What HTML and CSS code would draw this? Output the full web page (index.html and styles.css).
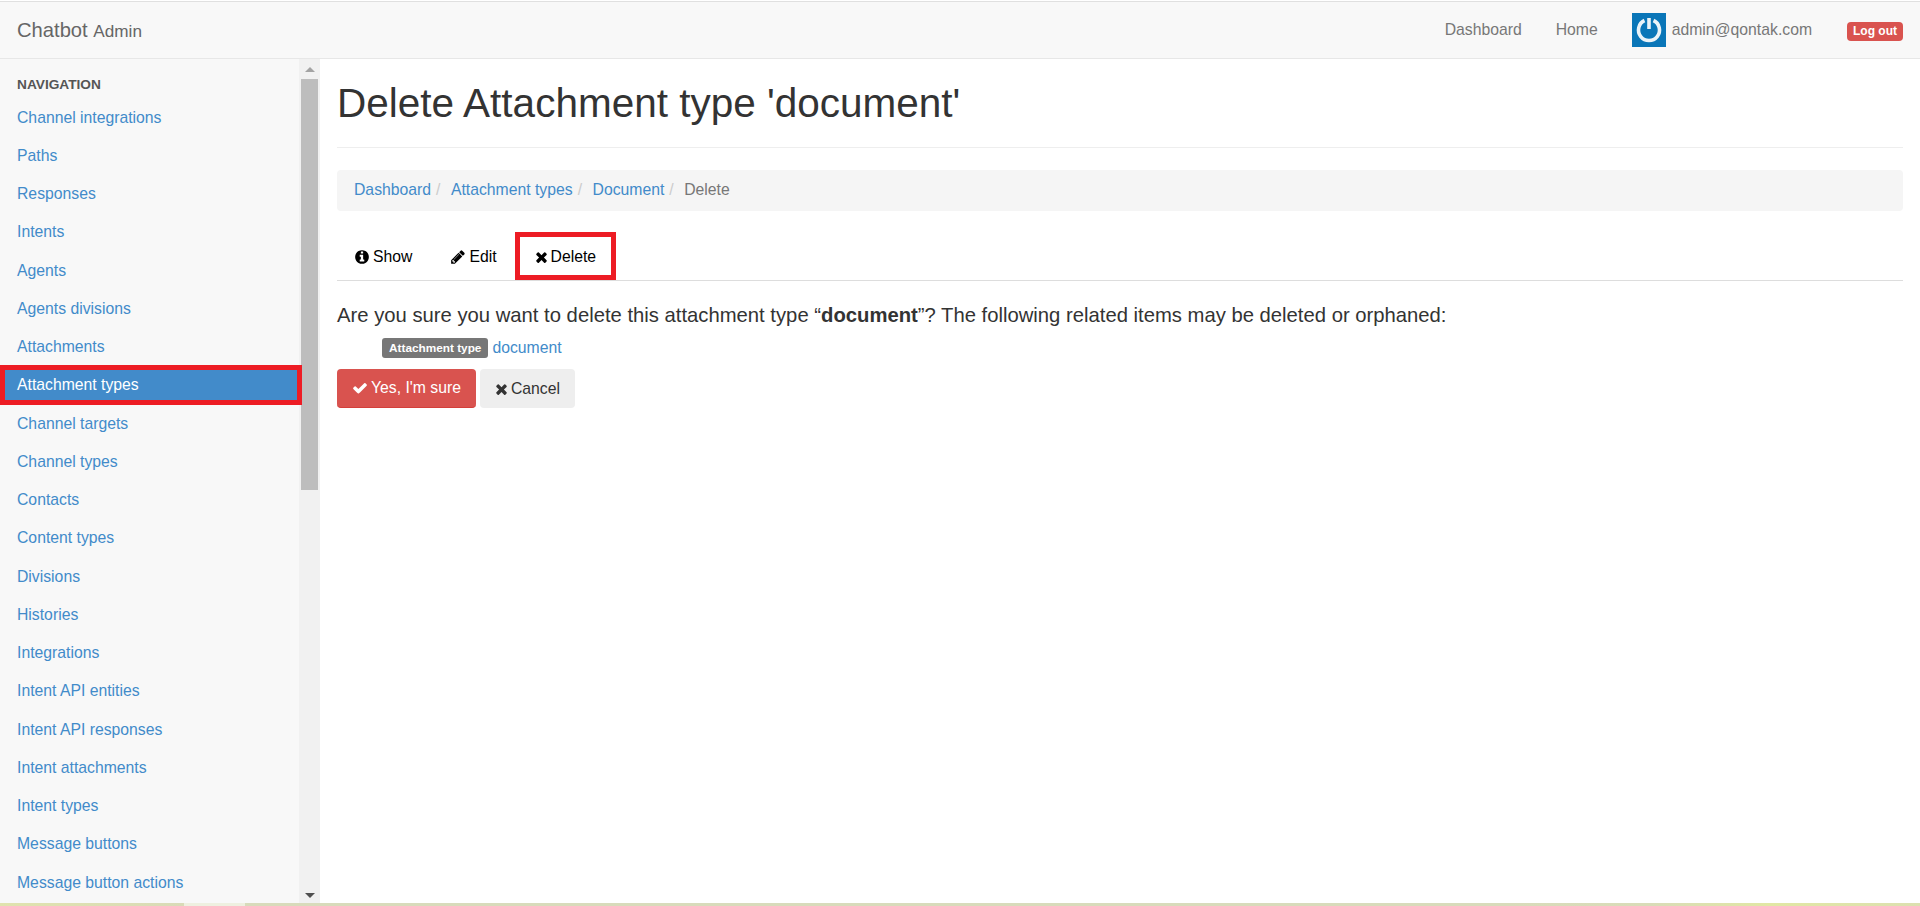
FILE: index.html
```html
<!DOCTYPE html>
<html>
<head>
    <title>Delete Attachment type</title>
    <link rel="stylesheet" href="styles.css">
</head>
<body>
    <!-- Top bar -->
    <header class="topbar">
        <a class="brand" href="#">Chatbot <small>Admin</small></a>
        <nav class="topnav">
            <a href="#">Dashboard</a>
            <a href="#">Home</a>
            <a class="user" href="#">
                <svg class="avatar" viewBox="0 0 34 34">
                    <rect width="34" height="34" fill="#0a76b8"/>
                    <path d="M12.5 7.5a10.5 10.5 0 1 0 9 0" fill="none" stroke="#eaf3f8" stroke-width="3.6"/>
                    <path d="M17 5v11" stroke="#eaf3f8" stroke-width="3.6"/>
                </svg>
                admin@qontak.com
            </a>
            <a class="logout" href="#">Log out</a>
        </nav>
    </header>

    <div class="layout">
        <!-- Sidebar -->
        <aside class="sidebar">
            <div class="sidebar-list">
                <h4 class="nav-title">NAVIGATION</h4>
                <ul class="nav-list">
                    <li><a href="#">Channel integrations</a></li>
                    <li><a href="#">Paths</a></li>
                    <li><a href="#">Responses</a></li>
                    <li><a href="#">Intents</a></li>
                    <li><a href="#">Agents</a></li>
                    <li><a href="#">Agents divisions</a></li>
                    <li><a href="#">Attachments</a></li>
                    <li class="active"><a href="#">Attachment types</a></li>
                    <li><a href="#">Channel targets</a></li>
                    <li><a href="#">Channel types</a></li>
                    <li><a href="#">Contacts</a></li>
                    <li><a href="#">Content types</a></li>
                    <li><a href="#">Divisions</a></li>
                    <li><a href="#">Histories</a></li>
                    <li><a href="#">Integrations</a></li>
                    <li><a href="#">Intent API entities</a></li>
                    <li><a href="#">Intent API responses</a></li>
                    <li><a href="#">Intent attachments</a></li>
                    <li><a href="#">Intent types</a></li>
                    <li><a href="#">Message buttons</a></li>
                    <li><a href="#">Message button actions</a></li>
                </ul>
            </div>
            <div class="scrollbar">
                <span class="arrow-up"></span>
                <div class="thumb"></div>
                <span class="arrow-down"></span>
            </div>
        </aside>

        <!-- Main content -->
        <main class="content">
            <h1 class="page-title">Delete Attachment type 'document'</h1>

            <ol class="breadcrumb">
                <li><a href="#">Dashboard</a></li>
                <li><a href="#">Attachment types</a></li>
                <li><a href="#">Document</a></li>
                <li class="current">Delete</li>
            </ol>

            <ul class="tabs">
                <li>
                    <svg class="icon" viewBox="0 0 1792 1792"><path d="M1152 1376v-160q0-14-9-23t-23-9h-96v-512q0-14-9-23t-23-9h-320q-14 0-23 9t-9 23v160q0 14 9 23t23 9h96v320h-96q-14 0-23 9t-9 23v160q0 14 9 23t23 9h448q14 0 23-9t9-23zm-128-896v-160q0-14-9-23t-23-9h-192q-14 0-23 9t-9 23v160q0 14 9 23t23 9h192q14 0 23-9t9-23zm640 416q0 209-103 385.5t-279.5 279.5-385.5 103-385.5-103-279.5-279.5-103-385.5 103-385.5 279.5-279.5 385.5-103 385.5 103 279.5 279.5 103 385.5z"/></svg>
                    Show
                </li>
                <li>
                    <svg class="icon" viewBox="0 0 1792 1792"><path d="M491 1536l91-91-235-235-91 91v107h128v128h107zm523-928q0-22-22-22-10 0-17 7l-542 542q-7 7-7 17 0 22 22 22 10 0 17-7l542-542q7-7 7-17zm-54-192l416 416-832 832h-416v-416zm683 96q0 53-37 90l-166 166-416-416 166-165q36-38 90-38 53 0 91 38l235 234q37 39 37 91z"/></svg>
                    Edit
                </li>
                <li class="marked">
                    <svg class="icon icon-times" viewBox="0 0 1408 1792"><path d="M1298 1322q0 40-28 68l-136 136q-28 28-68 28t-68-28l-294-294-294 294q-28 28-68 28t-68-28l-136-136q-28-28-28-68t28-68l294-294-294-294q-28-28-28-68t28-68l136-136q28-28 68-28t68 28l294 294 294-294q28-28 68-28t68 28l136 136q28 28 28 68t-28 68l-294 294 294 294q28 28 28 68z"/></svg>
                    Delete
                </li>
            </ul>

            <p class="confirm">Are you sure you want to delete this attachment type “<b>document</b>”? The following related items may be deleted or orphaned:</p>

            <div class="related">
                <span class="label">Attachment type</span>
                <a href="#">document</a>
            </div>

            <div class="actions">
                <button class="btn btn-danger">
                    <svg class="icon" viewBox="0 0 1792 1792"><path d="M1671 566q0 40-28 68l-724 724-136 136q-28 28-68 28t-68-28l-136-136-362-362q-28-28-28-68t28-68l136-136q28-28 68-28t68 28l294 295 656-657q28-28 68-28t68 28l136 136q28 28 28 68z"/></svg>
                    Yes, I'm sure
                </button>
                <button class="btn btn-default">
                    <svg class="icon icon-times" viewBox="0 0 1408 1792"><path d="M1298 1322q0 40-28 68l-136 136q-28 28-68 28t-68-28l-294-294-294 294q-28 28-68 28t-68-28l-136-136q-28-28-28-68t28-68l294-294-294-294q-28-28-28-68t28-68l136-136q28-28 68-28t68 28l294 294 294-294q28-28 68-28t68 28l136 136q28 28 28 68t-28 68l-294 294 294 294q28 28 28 68z"/></svg>
                    Cancel
                </button>
            </div>
        </main>
    </div>

    <div class="bottom-strip"></div>
</body>
</html>
```

FILE: styles.css
```css
* {
    box-sizing: border-box;
}
html, body {
    height: 100%;
}
body {
    margin: 0;
    padding-top: 1px;
    display: flex;
    flex-direction: column;
    overflow: hidden;
    background: #fff;
    color: #333;
    font-family: "Liberation Sans", Arial, sans-serif;
    font-size: 15.75px;
    line-height: 22px;
}
a {
    color: #428bca;
    text-decoration: none;
}

/* Top bar */
.topbar {
    flex: none;
    height: 58px;
    display: flex;
    align-items: center;
    justify-content: space-between;
    padding: 0 17px;
    background: #f8f8f8;
    border-top: 1px solid #e0e0e0;
    border-bottom: 1px solid #e7e7e7;
}
.brand {
    color: #666;
    font-size: 20.2px;
}
.brand small {
    font-size: 85%;
}
.topnav {
    display: flex;
    align-items: center;
}
.topnav a {
    color: #777;
}
.topnav a + a {
    margin-left: 34px;
}
.topnav .user {
    display: flex;
    align-items: center;
    gap: 6px;
}
.avatar {
    width: 34px;
    height: 34px;
}
.topnav .logout {
    margin-left: 35px;
    margin-top: 2px;
    padding: 0 6px;
    height: 19px;
    border-radius: 4px;
    background: #d9534f;
    color: #fff;
    font-size: 12px;
    font-weight: bold;
    line-height: 19px;
}

.layout {
    flex: 1;
    min-height: 0;
    display: flex;
}

/* Sidebar */
.sidebar {
    flex: none;
    width: 320px;
    display: flex;
    background: #f8f8f8;
}
.sidebar-list {
    width: 299px;
    flex: none;
    position: relative;
    z-index: 1;
}
.nav-title {
    margin: 0;
    padding: 16px 17px 0;
    height: 39.5px;
    color: #555;
    font-size: 13.7px;
    line-height: 20px;
}
.nav-list {
    list-style: none;
    margin: 0;
    padding: 0;
}
.nav-list li {
    height: 38.25px;
    position: relative;
}
.nav-list a {
    display: flex;
    align-items: center;
    height: 100%;
    padding: 0 17px;
}
.nav-list .active a {
    position: relative;
    top: -1px;
    height: 40px;
    background: #428bca;
    color: #fff;
}
.nav-list .active::after {
    content: "";
    box-sizing: border-box;
    position: absolute;
    left: 0;
    top: -1px;
    right: -3px;
    height: 40px;
    border: 5px solid #ed1c24;
}
.scrollbar {
    flex: 1;
    display: flex;
    flex-direction: column;
    align-items: center;
    background: #f1f1f1;
}
.arrow-up, .arrow-down {
    flex: none;
    width: 0;
    height: 0;
    border-left: 5px solid transparent;
    border-right: 5px solid transparent;
}
.arrow-up {
    margin: 8px 0 7px;
    border-bottom: 5px solid #a3a3a3;
}
.arrow-down {
    margin: auto 0 5px;
    border-top: 5px solid #505050;
}
.thumb {
    width: 17px;
    height: 411px;
    background: #bdbdbd;
}

/* Main content */
.content {
    flex: 1;
    min-width: 0;
    padding: 0 17px;
}
.page-title {
    margin: 21px 0 0;
    padding-bottom: 20px;
    border-bottom: 1px solid #eee;
    color: #333;
    font-size: 40.5px;
    font-weight: normal;
    line-height: 47px;
}
.breadcrumb {
    list-style: none;
    display: flex;
    height: 41px;
    margin: 22px 0 21px;
    padding: 0 17px 2px;
    align-items: center;
    background: #f5f5f5;
    border-radius: 4px;
}
.breadcrumb li + li::before {
    content: "/";
    padding: 0 10.5px 0 5px;
    color: #ccc;
}
.breadcrumb .current {
    color: #777;
}
.tabs {
    list-style: none;
    display: flex;
    gap: 4px;
    height: 49px;
    margin: 0;
    padding: 0;
    border-bottom: 1px solid #ddd;
}
.tabs li {
    display: flex;
    align-items: center;
    gap: 3px;
    padding: 1px 17px 0;
    color: #000;
}
.tabs .marked {
    margin-left: -3px;
    padding: 1px 15px 0;
    border: 5px solid #ed1c24;
    height: 48px;
}
.icon {
    width: 16px;
    height: 16px;
    fill: currentColor;
}
.icon-times {
    width: 13px;
}
.confirm {
    margin: 22px 0 0;
    font-size: 20.25px;
    line-height: 25px;
}
.related {
    display: flex;
    align-items: center;
    gap: 4px;
    height: 24px;
    margin: 8px 0 0 45px;
}
.label {
    height: 20px;
    padding: 0 7px;
    border-radius: 3px;
    background: #777;
    color: #fff;
    font-size: 11.8px;
    font-weight: bold;
    line-height: 20px;
}
.actions {
    display: flex;
    gap: 4px;
    margin-top: 9px;
}
.btn {
    display: flex;
    align-items: center;
    gap: 3px;
    height: 39px;
    padding: 0 15px;
    border: 0;
    border-radius: 4px;
    font: inherit;
}
.btn-danger {
    background: #d9534f;
    border-bottom: 1px solid #d43f3a;
    color: #fff;
}
.btn-default {
    background: #eee;
    color: #333;
}

/* Strip of the window behind */
.bottom-strip {
    flex: none;
    height: 3px;
    background: linear-gradient(to right, #e0e3ae 0, #d9dbb8 184px, #eef0e0 184px, #eef0e0 245px, #d8dbbb 245px, #d8dbbb 1500px, #d9dcb8 1650px, #e1e7a4 1770px, #dce0b0 1920px);
}
```
